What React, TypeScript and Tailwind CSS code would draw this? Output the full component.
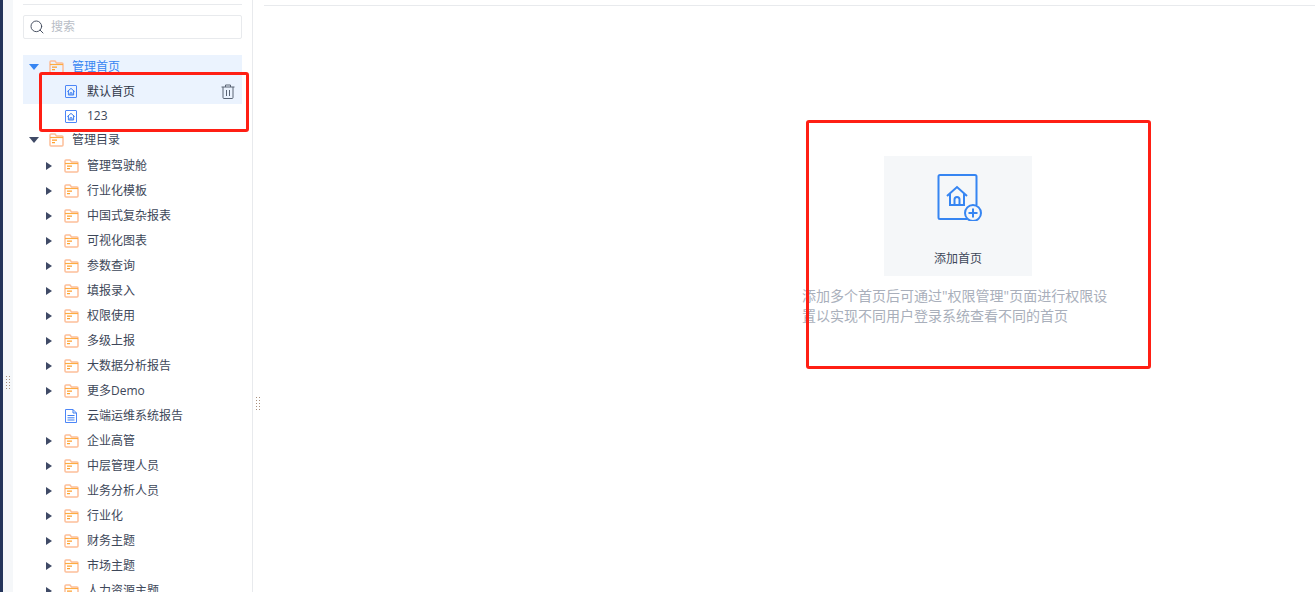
import { Search } from "lucide-react";

const demoFolders = ["管理驾驶舱", "行业化模板", "中国式复杂报表", "可视化图表", "参数查询", "填报录入", "权限使用", "多级上报", "大数据分析报告", "更多Demo"];
const roleFolders = ["企业高管", "中层管理人员", "业务分析人员", "行业化", "财务主题", "市场主题", "人力资源主题"];

function Folder() {
  return (
    <svg width="15" height="14" viewBox="0 0 15 14" fill="none" className="shrink-0">
      <path d="M1 12V2a1 1 0 0 1 1-1h4l1.500 2H13a1 1 0 0 1 1 1v8a1 1 0 0 1-1 1H2a1 1 0 0 1-1-1Z" stroke="#fdbf99" strokeWidth="1.500" />
      <path d="M1 4.500h13" stroke="#ffab40" strokeWidth="1.200" />
      <path d="M3 7.200h5M3 9.700h3" stroke="#ffa02e" strokeWidth="1.200" />
    </svg>
  );
}

function HomeFile() {
  return (
    <svg width="12" height="13" viewBox="0 0 12 13" fill="none" className="shrink-0">
      <rect x="0.5" y="0.5" width="11" height="12" rx="0.5" stroke="#4d86f7" />
      <path d="M2.300 6.600 6 3.400l3.700 3.200M3.400 5.800V10h5.200V5.800M5 10V7.800h2V10" stroke="#3d7ef0" strokeWidth="1" />
    </svg>
  );
}

function Report() {
  return (
    <svg width="12" height="14" viewBox="0 0 12 14" fill="none" className="shrink-0">
      <path d="M.5.5h7.500l3.500 3.500v9.500H.5Z" stroke="#4d86f7" />
      <path d="M8 .5V4h3.500M2.500 6.500h7M2.500 8.800h7M2.500 11h7" stroke="#3d7ef0" />
    </svg>
  );
}

function ArrowRight() {
  return (
    <svg width="6" height="8" viewBox="0 0 6 8" className="shrink-0">
      <path d="M0 0l6 4-6 4Z" fill="#3f4a66" />
    </svg>
  );
}

function ArrowDown({ color }: { color: string }) {
  return (
    <svg width="10" height="6" viewBox="0 0 10 6" className="shrink-0">
      <path d="M0 0h10L5 6Z" fill={color} />
    </svg>
  );
}

function Grip() {
  return (
    <svg width="5" height="13" viewBox="0 0 5 13" className="absolute">
      <path d="M0 0h1v1H0ZM3 0h1v1H3ZM0 3h1v1H0ZM3 3h1v1H3ZM0 6h1v1H0ZM3 6h1v1H3ZM0 9h1v1H0ZM3 9h1v1H3ZM0 12h1v1H0ZM3 12h1v1H3Z" fill="#a98f7c" />
    </svg>
  );
}

function FolderRow({ name }: { name: string }) {
  return (
    <div className="flex items-center h-[25px] pl-[23px] shrink-0">
      <ArrowRight />
      <div className="ml-[12px]">
        <Folder />
      </div>
      <span className="ml-[8px] text-[#3d4759]">{name}</span>
    </div>
  );
}

export default function App() {
  return (
    <div className="relative flex h-[592px] w-[1315px] overflow-hidden bg-white text-[12px] font-['Open_Sans','Noto_Sans_CJK_SC',sans-serif]">
      {/* left edge */}
      <div className="w-[3px] bg-[#24345a] shrink-0" />
      <div className="relative w-[10px] bg-[#f5f7f9] shrink-0 flex items-center justify-center">
        <div className="relative w-[5px] h-[13px] mt-[172px] ml-[1px]">
          <Grip />
        </div>
      </div>

      {/* tree */}
      <aside className="w-[240px] border-r border-[#e8eaed] px-[10px] shrink-0 flex flex-col overflow-hidden">
        <div className="mt-[4px] h-px bg-[#e8eaed] shrink-0" />
        <div className="mt-[10px] flex items-center h-[24px] border border-[#e8eaed] rounded-[2px] pl-[5px] shrink-0">
          <Search size={16} strokeWidth={1.4} className="text-[#3d4759]" />
          <span className="ml-[6px] text-[#b8bdc6]">搜索</span>
        </div>

        <div className="mt-[16px] bg-[#ebf3fe] shrink-0">
          <div className="flex items-center h-[24px] pl-[6px]">
            <ArrowDown color="#3685f2" />
            <div className="ml-[10px]">
              <Folder />
            </div>
            <span className="ml-[8px] text-[#3685f2]">管理首页</span>
          </div>
          <div className="flex items-center h-[25px] pl-[42px] pr-[7px]">
            <HomeFile />
            <span className="ml-[10px] text-[#2f3849]">默认首页</span>
            <svg width="14" height="15" viewBox="0 0 14 15" fill="none" className="ml-auto">
              <path d="M.5 3h13M4.500 3V1h5v2M2 3v10.500a1 1 0 0 0 1 1h8a1 1 0 0 0 1-1V3M5.500 6v6M8.500 6v6" stroke="#5a6474" />
            </svg>
          </div>
        </div>
        <div className="flex items-center h-[24px] pl-[42px] shrink-0">
          <HomeFile />
          <span className="ml-[10px] text-[#3d4759]">123</span>
        </div>
        <div className="flex items-center h-[25px] pb-[2px] pl-[6px] shrink-0">
          <ArrowDown color="#3f4a66" />
          <div className="ml-[10px]">
            <Folder />
          </div>
          <span className="ml-[8px] text-[#3d4759]">管理目录</span>
        </div>

        {demoFolders.map((name) => (
          <FolderRow key={name} name={name} />
        ))}
        <div className="flex items-center h-[25px] pl-[42px] shrink-0">
          <Report />
          <span className="ml-[10px] text-[#3d4759]">云端运维系统报告</span>
        </div>
        {roleFolders.map((name) => (
          <FolderRow key={name} name={name} />
        ))}
      </aside>

      {/* main */}
      <main className="relative flex-1 min-w-0">
        <div className="ml-[11px] mt-[5px] h-px bg-[#e8eaed]" />
        <div className="absolute left-[3px] top-[397px]">
          <Grip />
        </div>
        <div className="ml-[550px] mt-[150px] w-[306px]">
          <div className="ml-[81px] w-[148px] h-[120px] bg-[#f5f7f9] flex flex-col items-center">
            <svg width="48" height="48" viewBox="0 0 48 48" fill="none" className="mt-[17px] ml-[5px]">
              <path d="M39.500 32V3.500A1.500 1.500 0 0 0 38 2H3A1.500 1.500 0 0 0 1.500 3.500v41A1.500 1.500 0 0 0 3 46h27" stroke="#3685f2" strokeWidth="2" />
              <path d="M10 23 20 14l10 9M13 20.500V32h14V20.500M17.500 32v-5.500a2.500 2.500 0 0 1 5 0V32" stroke="#3685f2" strokeWidth="2" />
              <circle cx="36" cy="40" r="8" fill="#f5f7f9" stroke="#3685f2" strokeWidth="2" />
              <path d="M36 35.500v9M31.500 40h9" stroke="#3685f2" strokeWidth="2" />
            </svg>
            <span className="mt-[29px] text-[#3d4759]">添加首页</span>
          </div>
          <p className="mt-[10px] -ml-px text-[14px] leading-[20px] text-[#a9afbb]">添加多个首页后可通过"权限管理"页面进行权限设置以实现不同用户登录系统查看不同的首页</p>
        </div>
      </main>

      {/* annotation boxes */}
      <div className="absolute left-[39px] top-[72px] w-[210px] h-[60px] border-[3px] border-[#ff1f14] rounded-[3px]" />
      <div className="absolute left-[806px] top-[120px] w-[345px] h-[249px] border-[3px] border-[#ff1f14] rounded-[3px]" />
    </div>
  );
}
